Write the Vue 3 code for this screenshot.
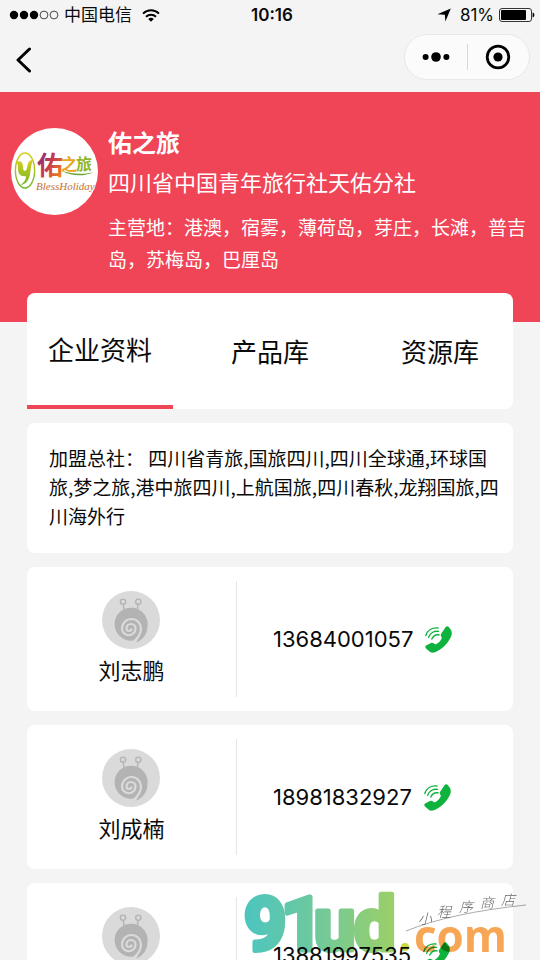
<script setup>
import { ref } from 'vue'

const company = {
  name: '佑之旅',
  branch: '四川省中国青年旅行社天佑分社',
  areas: '港澳，宿雾，薄荷岛，芽庄，长滩，普吉岛，苏梅岛，巴厘岛',
  parents: '四川省青旅,国旅四川,四川全球通,环球国旅,梦之旅,港中旅四川,上航国旅,四川春秋,龙翔国旅,四川海外行',
}

const tabs = ['企业资料', '产品库', '资源库']
const active = ref(0)

// the third contact has no name on file yet
const contacts = [
  { name: '刘志鹏', phone: '13684001057' },
  { name: '刘成楠', phone: '18981832927' },
  { name: '', phone: '13881997535' },
]
</script>

<template>
  <div class="app">
    <header class="top">
      <div class="status">
        <div class="status-left">
          <svg width="50" height="10" viewBox="0 0 50 10">
            <circle v-for="n in 3" :key="n" :cx="n * 10 - 5" cy="5" r="4.2" />
            <circle v-for="n in 2" :key="n + 3" :cx="n * 10 + 25" cy="5" r="3.9" fill="none" stroke="#000" stroke-width=".7" />
          </svg>
          <span>中国电信</span>
          <svg class="wifi" width="18" height="13" viewBox="0 0 18 13" fill="none" stroke="#000" stroke-width="2">
            <path d="M1 4.6a11.5 11.5 0 0 1 16 0" />
            <path d="M4 7.7a7.3 7.3 0 0 1 10 0" />
            <path d="M9 12.8L6.2 10a4 4 0 0 1 5.6 0z" fill="#000" stroke="none" />
          </svg>
        </div>
        <strong class="clock">10:16</strong>
        <div class="status-right">
          <svg width="14" height="14" viewBox="0 0 14 14"><path d="M13.8.4L8.4 13.4 7.8 6.8.4 6.2z" /></svg>
          <span class="percent">81%</span>
          <svg width="36" height="14" viewBox="0 0 36 14">
            <rect x=".5" y=".5" width="32" height="13" rx="2.5" fill="none" stroke="#333" />
            <rect x="2" y="2" width="25" height="10" rx="1" />
            <path d="M33.6 4.5c2.4.6 2.4 4.4 0 5z" />
          </svg>
        </div>
      </div>

      <nav class="nav">
        <button class="back" aria-label="返回">
          <svg width="16" height="26" viewBox="0 0 16 26" fill="none" stroke="#000" stroke-width="3" stroke-linecap="round" stroke-linejoin="round">
            <path d="M13.5 2L2 13l11.5 11" />
          </svg>
        </button>
        <div class="capsule">
          <button aria-label="更多">
            <svg width="28" height="12" viewBox="0 0 28 12">
              <circle cx="3.6" cy="6" r="3" />
              <circle cx="14" cy="6" r="4.8" />
              <circle cx="24.4" cy="6" r="3" />
            </svg>
          </button>
          <button aria-label="关闭">
            <svg width="26" height="26" viewBox="0 0 26 26">
              <circle cx="13" cy="13" r="10.8" fill="none" stroke="#000" stroke-width="2.8" />
              <circle cx="13" cy="13" r="4.6" />
            </svg>
          </button>
        </div>
      </nav>
    </header>

    <section class="hero">
      <svg class="logo" width="87" height="87" viewBox="0 0 87 87">
        <defs>
          <linearGradient id="you" x1="0" y1="0" x2="1" y2="1">
            <stop offset=".1" stop-color="#7b2a86" />
            <stop offset=".5" stop-color="#c93a4c" />
            <stop offset=".9" stop-color="#f08a1c" />
          </linearGradient>
          <linearGradient id="leaf" x1="0" y1="0" x2="0" y2="1">
            <stop offset="0" stop-color="#d6cf1c" />
            <stop offset="1" stop-color="#6fb52a" />
          </linearGradient>
        </defs>
        <circle cx="43.5" cy="43.5" r="43.5" fill="#fff" />
        <ellipse cx="14" cy="42.5" rx="9.6" ry="17.5" fill="none" stroke="url(#leaf)" stroke-width="1.4" />
        <path d="M5 34c5-2 7 1 7 5 0 5 3 5 4 1s1-8 6-8c-2 4-2 9-3 14-1 7-5 11-10 11 4-2 6-5 6-9-5 1-8-2-8-7 0-3 0-5-2-7z" fill="url(#leaf)" />
        <text class="brush" x="26" y="47" font-size="26" fill="url(#you)">佑</text>
        <text class="brush" x="50" y="42" font-size="16" fill="#e9a51c">之</text>
        <text class="brush" x="65" y="42" font-size="16" fill="#93b52b">旅</text>
        <path d="M51 43c9 2.5 18 4 31 1.5-9 4-21 4-31-1.5z" fill="#69a531" />
        <text class="script" x="25" y="62" font-size="11">BlessHoliday</text>
      </svg>
      <div class="intro">
        <h1>{{ company.name }}</h1>
        <p class="branch">{{ company.branch }}</p>
        <p class="areas">主营地：{{ company.areas }}</p>
      </div>
    </section>

    <main class="content">
      <div class="tabs">
        <button
          v-for="(tab, i) in tabs"
          :key="tab"
          :class="['tab', { 'tab--on': active === i }]"
          @click="active = i"
        >{{ tab }}</button>
      </div>

      <p class="parents">加盟总社： {{ company.parents }}</p>

      <article v-for="c in contacts" :key="c.phone" class="contact">
        <div class="person">
          <svg width="58" height="58" viewBox="0 0 58 58">
            <circle cx="29" cy="29" r="29" fill="#dadada" />
            <g fill="none" stroke="#b3b3b3" stroke-width="1.4">
              <circle cx="21" cy="10.7" r="2.6" />
              <circle cx="36.3" cy="10.7" r="2.6" />
              <path d="M21.3 13.5l1 8M36 13.5l-1 8" />
            </g>
            <path d="M34 51.5c7-2.5 11.5-9 11.5-16.500a16.500 16.500 0 1 0-19 14.500c4 .5 7 0 10-2z" fill="#b3b3b3" />
            <path d="M29.5 37.5a2.5 2.5 0 0 1-5 0a4.500 4.500 0 0 1 9 0a6.700 6.700 0 0 1-13.500 0a9.500 9.500 0 0 1 19 0c0 5-2.500 9-7 13" fill="none" stroke="#dadada" stroke-width="2.2" />
          </svg>
          <span>{{ c.name }}</span>
        </div>
        <a class="phone" :href="`tel:${c.phone}`">
          {{ c.phone }}
          <svg width="27" height="27" viewBox="0 0 27 27">
            <path d="M20.5 1.200C21.700 0 23 .2 24 1.200L26 4c1 2 1 4 .3 6C23.500 17 17 23.500 10 26.200c-2 .8-4 .6-5.500-.7L1 22.500C0 21.500 0 20 1.500 19.200L6 17c1-.5 2-.3 3 .6l1.500.9c3-1.200 5.500-4 6.500-7C15.800 10.500 15.500 9.500 16 8z" fill="#0eb33e" />
            <path d="M.8 9.500C2.500 4.500 7 1.200 13 2M3.600 11.300C5 7.300 9 4.800 13.500 5.400M6.800 13C8 10 10.500 8.400 14 8.800" fill="none" stroke="#0eb33e" stroke-width="1.4" stroke-linecap="round" />
          </svg>
        </a>
      </article>
    </main>

    <!-- store mark floating over the list -->
    <svg class="mark" width="300" height="72" viewBox="0 0 300 72">
      <defs>
        <linearGradient id="mark" gradientUnits="userSpaceOnUse" x1="3" y1="0" x2="153" y2="0">
          <stop offset="0" stop-color="#4bc5c0" />
          <stop offset=".5" stop-color="#70c99b" />
          <stop offset="1" stop-color="#9bcf68" />
        </linearGradient>
      </defs>
      <text class="mark-name" x="4 41 74 114" y="62" fill="url(#mark)" stroke="url(#mark)">91ud</text>
      <circle cx="165" cy="59" r="4" fill="#c5da43" />
      <text class="mark-com" x="174" y="64">com</text>
      <path d="M166 43Q210 25 286 17" fill="none" stroke="#aaa" stroke-width="1" />
      <text class="mark-store" x="178 197 219 240 261" y="36 29 24 20 17">小程序商店</text>
    </svg>
  </div>
</template>

<style>
body {
  margin: 0;
  background: #f4f4f4;
}
</style>

<style scoped>
.app {
  height: 100vh;
  overflow-y: auto;
  scrollbar-width: none;
  background: #f4f4f4;
  color: #0a0a0a;
  font-family: Inter, "Noto Sans CJK SC", sans-serif;
}

button {
  padding: 0;
  border: 0;
  background: none;
  color: inherit;
  font: inherit;
}

svg {
  display: block;
  flex: none;
}

/* status bar */
.status {
  display: grid;
  grid-template-columns: 1fr auto 1fr;
  align-items: center;
  height: 30px;
  padding: 0 5px 0 9px;
  font-size: 17px;
  line-height: 30px;
}

.status-left,
.status-right {
  display: flex;
  align-items: center;
  gap: 5px;
}

.wifi { margin-left: 5px; }

.status-right { justify-content: flex-end; }

.percent { margin-left: 4px; }

.clock { font-weight: 600; }

/* navigation */
.nav {
  display: flex;
  justify-content: space-between;
  padding: 4px 10px 12px 16px;
}

.back { padding-top: 6px; }

.capsule {
  display: flex;
  box-sizing: border-box;
  width: 126px;
  height: 46px;
  padding: 9px 0;
  border: 1px solid #e8e8e8;
  border-radius: 23px;
  background: #fbfbfb;
}

.capsule button {
  display: flex;
  flex: 1;
  align-items: center;
  justify-content: center;
}

.capsule button + button { border-left: 1px solid #d8d8d8; }

/* company banner */
.hero {
  display: flex;
  gap: 10px;
  padding: 36px 10px 45px 11px;
  background: #f04457;
  color: #fff;
}

.intro { flex: 1; }

.brush {
  font-family: "Noto Sans CJK SC", sans-serif;
  font-weight: 700;
}

.script {
  fill: #c8702c;
  font-family: "Liberation Serif", serif;
  font-style: italic;
}

h1,
p {
  margin: 0;
}

h1 {
  font-size: 24px;
  font-weight: 600;
  line-height: 32px;
}

.branch {
  margin-top: 7px;
  font-size: 22px;
  line-height: 32px;
}

.areas {
  margin-top: 14px;
  font-size: 19px;
  line-height: 32px;
}

/* cards */
.content {
  display: flex;
  flex-direction: column;
  gap: 14px;
  margin: -29px 5% 14px;
}

.tabs,
.parents,
.contact {
  border-radius: 8px;
  background: #fff;
}

.tabs {
  display: flex;
  justify-content: space-between;
  height: 116px;
}

.tab {
  width: 30%;
  padding-bottom: 2px;
  font-size: 26px;
}

.tab--on { border-bottom: 4px solid #f04457; }

.parents {
  padding: 20px 12px 23px 22px;
  font-family: "Noto Sans CJK SC", sans-serif;
  font-size: 19px;
  line-height: 29px;
}

.contact {
  display: flex;
  padding: 14px 0;
}

.person {
  display: flex;
  flex-direction: column;
  align-items: center;
  gap: 6px;
  width: 43%;
  height: 106px;
  padding-top: 10px;
  border-right: 1px solid #e6e6e6;
  font-size: 22px;
  line-height: 32px;
}

.phone {
  display: flex;
  flex: 1;
  align-items: center;
  gap: 12px;
  padding-left: 36px;
  color: inherit;
  font-size: 22px;
  text-decoration: none;
}

.mark {
  position: fixed;
  right: 0;
  bottom: 0;
  mix-blend-mode: multiply;
  pointer-events: none;
}

.mark-name {
  font-family: Roboto, sans-serif;
  font-size: 74px;
  font-weight: 700;
  stroke-width: 5px;
  stroke-linejoin: round;
}

.mark-com {
  fill: #f6a654;
  font-family: "Open Sans", sans-serif;
  font-size: 44px;
  font-weight: 700;
}

.mark-store {
  fill: #666;
  font-family: "Noto Sans CJK SC", sans-serif;
  font-size: 14px;
  font-style: italic;
  font-weight: 300;
}
</style>
